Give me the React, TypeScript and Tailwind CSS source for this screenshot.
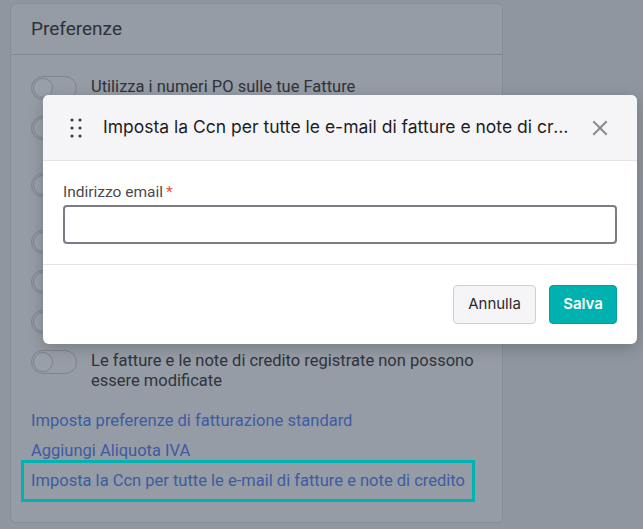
const rows: string[][] = [
  ["Utilizza i numeri PO sulle tue Fatture"],
  ["Consenti ai clienti di pagare le fatture online", "tramite il portale clienti"],
  ["Invia automaticamente le fatture ai clienti", "quando vengono registrate"],
  ["Aggiungi i termini di pagamento alle fatture"],
  ["Mostra il numero di ordine sulle fatture"],
  ["Mostra le note sulle fatture e note di credito"],
  ["Le fatture e le note di credito registrate non possono", "essere modificate"],
];

const Toggle = () => (
  <div className="flex h-[24px] w-[46px] shrink-0 items-center rounded-full border border-[#7d838c] bg-[#979da6] px-[1px]">
    <div className="h-[20px] w-[20px] rounded-full border border-[#7d838c] bg-[#9aa0a9]" />
  </div>
);

const DragIcon = () => (
  <svg width="12" height="20" viewBox="0 0 12 20" fill="#3d3d3d">
    <circle cx="2" cy="2" r="1.6" />
    <circle cx="10" cy="2" r="1.6" />
    <circle cx="2" cy="10" r="1.6" />
    <circle cx="10" cy="10" r="1.6" />
    <circle cx="2" cy="18" r="1.6" />
    <circle cx="10" cy="18" r="1.6" />
  </svg>
);

const CloseIcon = () => (
  <svg width="16" height="16" viewBox="0 0 16 16" stroke="#8a8a8e" strokeWidth="2" strokeLinecap="square">
    <line x1="2" y1="2" x2="14" y2="14" />
    <line x1="14" y1="2" x2="2" y2="14" />
  </svg>
);

export default function App() {
  return (
    <div className="relative h-[529px] w-[643px] overflow-hidden bg-[#8f969f] pl-[10px] pt-[3px] font-['Roboto',sans-serif]">
      <div className="h-[520px] w-[493px] rounded-md border border-[#878d96] bg-[#969ca5]">
        <div className="flex h-[51px] items-center border-b border-[#828891] px-5">
          <h2 className="text-[19px] text-[#2d3138]">Preferenze</h2>
        </div>
        <div className="px-5 pt-[21px]">
          <div className="flex flex-col gap-4">
            {rows.map((lines, i) => (
              <div key={i} className="flex items-start gap-[14px]">
                <Toggle />
                <p className="whitespace-nowrap pt-[1px] text-[16.5px] leading-[20px] text-[#2f333a]">
                  {lines.map((l, j) => (
                    <span key={j} className="block">
                      {l}
                    </span>
                  ))}
                </p>
              </div>
            ))}
          </div>
          <div className="mt-[20px] flex flex-col text-[16.5px] leading-[20px] text-[#3c5ba3]">
            <a>Imposta preferenze di fatturazione standard</a>
            <a className="mt-[10px]">Aggiungi Aliquota IVA</a>
            <a className="-mx-[10px] -mt-[1px] w-fit whitespace-nowrap border-[3px] border-[#00b3b3] px-[7px] py-[8px]">
              Imposta la Ccn per tutte le e-mail di fatture e note di credito
            </a>
          </div>
        </div>
      </div>

      <div className="absolute left-[43px] top-[95px] w-[594px] overflow-hidden rounded-md bg-white shadow-[0_4px_16px_rgba(0,0,0,0.2)]">
        <div className="flex h-[66px] items-center gap-[15px] border-b border-[#e4e4e7] bg-[#f5f5f7] pl-[27px] pr-[29px]">
          <DragIcon />
          <h3 className="ml-[6px] min-w-0 flex-1 truncate font-['Inter',sans-serif] text-[17.5px] text-[#1d1d1f]">
            Imposta la Ccn per tutte le e-mail di fatture e note di credito
          </h3>
          <CloseIcon />
        </div>
        <div className="border-b border-[#e4e4e7] px-5 pb-[20px] pt-[21px]">
          <label className="block text-[15.5px] leading-[20px] text-[#4a4a4f]">
            Indirizzo email<span className="ml-[3px] text-[#e8562e]">*</span>
          </label>
          <input className="mt-[3px] block h-[39px] w-full rounded-[4px] border-2 border-[#7c7c84] bg-white" />
        </div>
        <div className="flex h-[79px] items-center justify-end gap-[13px] px-5 font-['Inter',sans-serif] text-[15px]">
          <button className="h-[39px] w-[83px] rounded-[4px] border border-[#cfcfd4] bg-[#f5f5f7] text-[#2a2a2e]">
            Annulla
          </button>
          <button className="h-[39px] w-[68px] rounded-[4px] border border-[#00a19f] bg-[#00b2af] font-semibold text-white">
            Salva
          </button>
        </div>
      </div>
    </div>
  );
}
